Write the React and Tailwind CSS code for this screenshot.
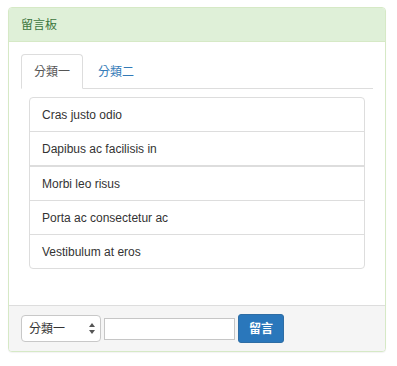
import { useState } from "react";

const items = [
  "Cras justo odio",
  "Dapibus ac facilisis in",
  "Morbi leo risus",
  "Porta ac consectetur ac",
  "Vestibulum at eros",
];

const font = {
  fontFamily: '"Liberation Sans", "Noto Sans CJK TC", sans-serif',
};

export default function App() {
  const [tab, setTab] = useState(0);
  const [cat, setCat] = useState("1");
  const [text, setText] = useState("");

  return (
    <div className="pt-[7px] pl-[8px] bg-white min-h-[366px]" style={font}>
      <div className="w-[378px] border border-[#d6e9c6] rounded-[4px] shadow-[0_1px_1px_rgba(0,0,0,0.05)] bg-white overflow-hidden">
        {/* Heading */}
        <div className="h-[34px] bg-[#dff0d8] border-b border-[#d6e9c6] text-[#3c763d] text-[12px] flex items-center px-[12px]">
          留言板
        </div>

        {/* Body */}
        <div className="pt-[12px] px-[12px] pb-[36px]">
          <ul className="flex border-b border-[#ddd] h-[35px] text-[12px]">
            {["分類一", "分類二"].map((t, i) => (
              <li key={t} className="mr-[2px] -mb-px">
                <button
                  onClick={() => setTab(i)}
                  className={
                    tab === i
                      ? "h-[35px] px-[12px] border border-[#ddd] border-b-transparent rounded-t-[4px] bg-white text-[#555]"
                      : "h-[35px] px-[12px] border border-transparent rounded-t-[4px] text-[#337ab7]"
                  }
                >
                  {t}
                </button>
              </li>
            ))}
          </ul>

          <div className="pt-[8px] px-[8px]">
            <ul className="border border-[#ddd] rounded-[4px] text-[12px] text-[#333]">
              {items.map((it, i) => (
                <li
                  key={it}
                  className={
                    i === 1
                      ? "h-[35px] border-b-2 border-[#ddd] flex items-center px-[12px]"
                      : i === items.length - 1
                      ? "h-[33px] flex items-center px-[12px]"
                      : "h-[34px] border-b border-[#ddd] flex items-center px-[12px]"
                  }
                >
                  {it}
                </li>
              ))}
            </ul>
          </div>
        </div>

        {/* Footer */}
        <div className="h-[46px] bg-[#f5f5f5] border-t border-[#ddd] flex items-center px-[12px]">
          <div className="relative w-[80px] h-[27px]">
            <select
              value={cat}
              onChange={(e) => setCat(e.target.value)}
              className="appearance-none w-full h-full bg-white border border-[#c8c8c8] rounded-[4px] pl-[7px] text-[12px] text-[#333] outline-none"
            >
              <option value="1">分類一</option>
              <option value="2">分類二</option>
            </select>
            <svg
              className="absolute right-[6px] top-[8px] pointer-events-none"
              width="6"
              height="11"
              viewBox="0 0 6 11"
            >
              <path d="M3 0 L6 4 L0 4 Z" fill="#555" />
              <path d="M3 11 L6 7 L0 7 Z" fill="#555" />
            </svg>
          </div>
          <input
            value={text}
            onChange={(e) => setText(e.target.value)}
            className="ml-[3px] w-[131px] h-[22px] bg-white border border-[#c6c6c6] outline-none px-[2px] text-[12px]"
          />
          <button className="ml-[3px] w-[46px] h-[29px] rounded-[3px] bg-[#2a77bb] border border-[#2e6da4] text-white text-[12px] font-bold">
            留言
          </button>
        </div>
      </div>
    </div>
  );
}
